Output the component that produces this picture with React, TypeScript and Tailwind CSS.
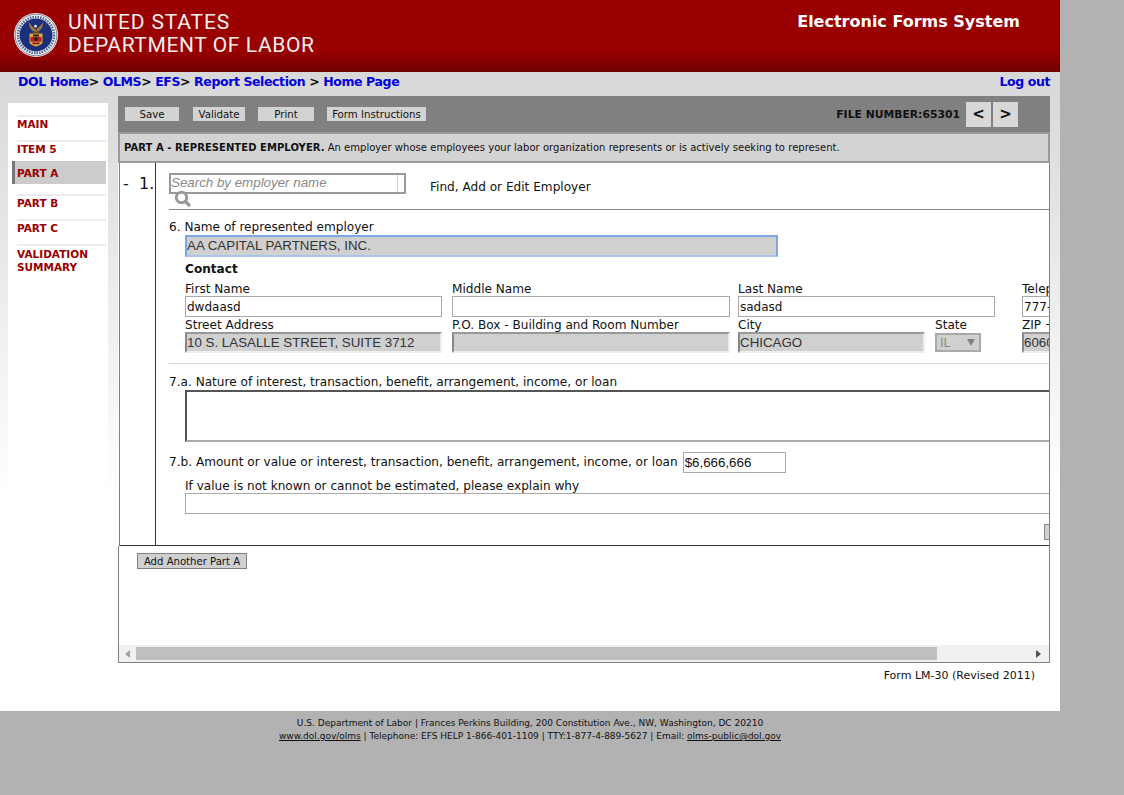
import * as React from "react"

const inputBase =
  "block h-[21px] border border-[#a9a9a9] bg-white pl-[1px] font-['DejaVu_Sans',sans-serif] text-[12px] text-[#111] outline-none"
const inputDisabled =
  "block h-[21px] border-2 border-t-[#999] border-l-[#888] border-r-[#eee] border-b-[#eee] bg-[#d0d0d0] font-['Liberation_Sans',sans-serif] text-[13.33px] text-[#333] outline-none"
const labelCls = "h-[14px] whitespace-nowrap leading-[16px] text-[12.1px] text-[#111]"

function Field(props: { label: string; value?: string; width: string; marginRight: string; disabled?: boolean }) {
  return (
    <div className={`${props.width} ${props.marginRight} shrink-0`}>
      <div className={labelCls}>{props.label}</div>
      <input
        readOnly
        value={props.value ?? ""}
        className={`${props.disabled ? inputDisabled : inputBase} mt-[1px] w-full`}
      />
    </div>
  )
}

function Seal() {
  return (
    <svg width="44" height="44" viewBox="0 0 44 44" className="shrink-0">
      <circle cx="22" cy="22" r="22" fill="#f4f4f0" />
      <circle cx="22" cy="22" r="20.8" fill="none" stroke="#4a5a8a" strokeWidth="0.7" />
      <circle cx="22" cy="22" r="18" fill="none" stroke="#5a6a96" strokeWidth="2.6" strokeDasharray="1.6 1" />
      <circle cx="22" cy="22" r="16.4" fill="#1b2f7d" />
      {/* eagle */}
      <path
        d="M22 16.5c-1 0-1.5-.8-1.5-1.6-1.6-.3-3.8-3.2-6-6.2.4 2.8 1.3 6.5 3 8 1.2 1 2.6 1.6 3.4 2h2.2c.8-.4 2.2-1 3.4-2 1.7-1.5 2.6-5.2 3-8-2.2 3-4.4 5.9-6 6.2 0 .8-.5 1.6-1.5 1.6z"
        fill="#9a7a3c"
      />
      <circle cx="21.6" cy="13.2" r="1.4" fill="#e8e0c8" />
      <path d="M18.5 18.5h7l-1 1.6h-5z" fill="#6b5326" />
      {/* shield */}
      <path d="M15.5 20.5h13v8.5c0 2.2-3.5 3.5-6.5 4.6-3-1.1-6.5-2.4-6.5-4.6z" fill="#e0a92c" />
      <path d="M16.5 24h11v4.6h-11z" fill="#b3202a" />
      <path d="M19 21.5h6v2h-6zM20.5 24.5h3v3.4h-3z" fill="#2a1a10" />
      <path d="M18 29.5h8l-1 1.8h-6z" fill="#7a1a1a" />
    </svg>
  )
}

function NavItem(props: { children: React.ReactNode; className?: string; active?: boolean }) {
  return (
    <div
      className={
        props.active
          ? `flex h-[23px] items-center border-l-[3px] border-[#777] bg-[#cccccc] pl-[2px] pt-[2px] ${props.className ?? ""}`
          : `ml-[5px] border-t-2 border-[#ececec] ${props.className ?? ""}`
      }
    >
      <div className="text-[10.5px] font-bold leading-[13px] text-[#990000]">{props.children}</div>
    </div>
  )
}

function ToolButton(props: { label: string; width: string; marginLeft: string }) {
  return (
    <button
      className={`${props.width} ${props.marginLeft} h-[14px] shrink-0 bg-[#d3d3d3] pt-[1px] text-center text-[10.2px] leading-[14px] text-[#111]`}
    >
      {props.label}
    </button>
  )
}

export default function App() {
  return (
    <div className="h-[795px] w-[1124px] overflow-hidden bg-[#b2b2b2] font-['DejaVu_Sans',sans-serif]">
      <div className="flex h-[711px] w-[1060px] flex-col bg-gradient-to-b from-[#d8d8d8] from-[10%] to-white to-[70%]">
        <header className="flex h-[72px] shrink-0 bg-[linear-gradient(to_bottom,#9a0000_0%,#990000_72%,#6f0000_100%)]">
          <div className="ml-[14px] mt-[13px]">
            <Seal />
          </div>
          <div className="ml-[10px] mt-[11px] font-['Roboto',sans-serif] text-[21px] font-normal leading-[23px] tracking-[0.6px] text-[#f3eeee]">
            <div className="tracking-[0.85px]">UNITED STATES</div>
            <div>DEPARTMENT OF LABOR</div>
          </div>
          <div className="ml-auto mr-[40px] mt-[11px] text-[16px] font-bold leading-[22px] text-white">
            Electronic Forms System
          </div>
        </header>

        <div className="flex h-[24px] shrink-0 items-center justify-between pb-[3px] pl-[18px] pr-[10px] text-[12.5px] font-bold tracking-[-0.4px] text-[#111]">
          <div className="whitespace-pre">
            <a className="text-[#0000dd]">DOL Home</a>&gt; <a className="text-[#0000dd]">OLMS</a>&gt;{" "}
            <a className="text-[#0000dd]">EFS</a>&gt; <a className="text-[#0000dd]">Report Selection</a> &gt;{" "}
            <a className="text-[#0000dd]">Home Page</a>
          </div>
          <a className="text-[#0000dd]">Log out</a>
        </div>

        <div className="flex">
          <aside className="ml-[8px] mt-[7px] h-[384px] w-[100px] shrink-0 bg-white pl-[4px] pr-[2px] pt-[12px]">
            <NavItem className="h-[25px] pt-[1px]">MAIN</NavItem>
            <NavItem className="h-[21px] pt-[1px]">ITEM 5</NavItem>
            <NavItem active>PART A</NavItem>
            <NavItem className="mt-[10px] h-[25px] pt-[1px]">PART B</NavItem>
            <NavItem className="h-[25px] pt-[1px]">PART C</NavItem>
            <NavItem className="pt-[2px]">
              VALIDATION
              <br />
              SUMMARY
            </NavItem>
          </aside>

          <main className="ml-[10px] flex h-[567px] w-[932px] shrink-0 flex-col overflow-hidden">
            <div className="flex h-[36px] shrink-0 items-center bg-[#808080]">
              <ToolButton label="Save" width="w-[54px]" marginLeft="ml-[7px]" />
              <ToolButton label="Validate" width="w-[52px]" marginLeft="ml-[14px]" />
              <ToolButton label="Print" width="w-[56px]" marginLeft="ml-[13px]" />
              <ToolButton label="Form Instructions" width="w-[99px]" marginLeft="ml-[13px]" />
              <div className="ml-auto pt-[2px] text-[10.8px] font-bold text-[#111]">FILE NUMBER:65301</div>
              <div className="ml-[6px] flex h-[25px] w-[25px] items-center justify-center bg-[#d8d8d8] text-[15px] font-bold text-[#111]">
                &lt;
              </div>
              <div className="ml-[2px] mr-[32px] flex h-[25px] w-[25px] items-center justify-center bg-[#d8d8d8] text-[15px] font-bold text-[#111]">
                &gt;
              </div>
            </div>

            <div className="flex h-[31px] shrink-0 items-center whitespace-nowrap border-2 border-[#999] bg-[#d3d3d3] pl-[4px] text-[10px] text-[#111]">
              <b className="tracking-[0.06px]">PART A - REPRESENTED EMPLOYER.</b>
              <span className="ml-[3px] tracking-[0.03px]">
                An employer whose employees your labor organization represents or is actively seeking to represent.
              </span>
            </div>

            <div className="flex min-h-0 flex-1 flex-col border-b border-r border-[#808080] bg-white">
              <div className="ml-[1px] flex h-[383px] shrink-0 overflow-hidden border-b border-l border-b-[#333] border-l-[#808080]">
                <div className="w-[36px] shrink-0 whitespace-pre border-r border-[#333] pl-[3px] pt-[12px] text-[16px] leading-[18px] text-[#111]">
                  {"-  1."}
                </div>
                <div className="w-[893px] shrink-0 overflow-hidden pl-[13px]">
                  <div className="flex h-[47px] border-b border-[#888] pt-[10px]">
                    <div className="relative h-[21px] w-[237px] shrink-0 border-2 border-[#999]">
                      <div className="h-full w-[227px] border-r border-[#ccc] font-['Liberation_Sans',sans-serif] text-[13.33px] italic leading-[16px] text-[#8a8a8a]">
                        Search by employer name
                      </div>
                      <svg width="18" height="18" viewBox="0 0 18 18" className="absolute left-[3px] top-[15px]">
                        <circle cx="7.5" cy="7.5" r="5.2" fill="white" stroke="#999" strokeWidth="3" />
                        <path d="M11.5 11.5L15 15" stroke="#999" strokeWidth="3.4" strokeLinecap="round" />
                      </svg>
                    </div>
                    <div className="ml-[24px] mt-[6px] whitespace-nowrap text-[12.1px] leading-[16px] text-[#111]">
                      Find, Add or Edit Employer
                    </div>
                  </div>

                  <div className={`${labelCls} mt-[9px]`}>6. Name of represented employer</div>
                  <input
                    readOnly
                    value="AA CAPITAL PARTNERS, INC."
                    className="ml-[16px] mt-[2px] block h-[22px] w-[593px] border-2 border-[#7ea6e0] border-b-[#a8c4ec] bg-[#d0d0d0] pb-[1px] font-['Liberation_Sans',sans-serif] text-[13.33px] text-[#333] outline-none"
                  />

                  <div className="ml-[16px] mt-[4px] h-[14px] text-[12.1px] font-bold leading-[16px] text-[#111]">
                    Contact
                  </div>

                  <div className="ml-[16px] mt-[6px] flex">
                    <Field label="First Name" value="dwdaasd" width="w-[257px]" marginRight="mr-[10px]" />
                    <Field label="Middle Name" width="w-[278px]" marginRight="mr-[8px]" />
                    <Field label="Last Name" value="sadasd" width="w-[257px]" marginRight="mr-[27px]" />
                    <Field label="Telephone" value="777-555-1212" width="w-[120px]" marginRight="mr-0" />
                  </div>

                  <div className="ml-[16px] flex">
                    <Field
                      disabled
                      label="Street Address"
                      value="10 S. LASALLE STREET, SUITE 3712"
                      width="w-[257px]"
                      marginRight="mr-[10px]"
                    />
                    <Field
                      disabled
                      label="P.O. Box - Building and Room Number"
                      width="w-[278px]"
                      marginRight="mr-[8px]"
                    />
                    <Field disabled label="City" value="CHICAGO" width="w-[187px]" marginRight="mr-[10px]" />
                    <div className="mr-[41px] w-[46px] shrink-0">
                      <div className={labelCls}>State</div>
                      <div className="mt-[2px] flex h-[19px] items-center justify-between border-2 border-[#a9a9a9] bg-[#d0d0d0] pl-[3px] pr-[4px] font-['Liberation_Sans',sans-serif] text-[13px] text-[#8a8a8a]">
                        IL
                        <svg width="8" height="7" viewBox="0 0 8 7">
                          <path d="M0 0h8L4 7z" fill="#808080" />
                        </svg>
                      </div>
                    </div>
                    <Field disabled label="ZIP + 4" value="60603" width="w-[120px]" marginRight="mr-0" />
                  </div>

                  <div className="mt-[10px] h-px bg-[#d8d8d8]" />

                  <div className={`${labelCls} mt-[10px]`}>
                    7.a. Nature of interest, transaction, benefit, arrangement, income, or loan
                  </div>
                  <div className="ml-[16px] mt-[2px] h-[52px] w-[900px] border-2 border-[#555] border-b-[#aaa]" />

                  <div className="mt-[10px] flex h-[21px] items-start">
                    <div className="mt-[3px] h-[14px] whitespace-nowrap text-[12.1px] leading-[14px] text-[#111]">
                      7.b. Amount or value or interest, transaction, benefit, arrangement, income, or loan
                    </div>
                    <input
                      readOnly
                      value="$6,666,666"
                      className={`${inputBase} ml-[5px] w-[103px] shrink-0 !font-['Liberation_Sans',sans-serif] !text-[13.33px]`}
                    />
                  </div>

                  <div className={`${labelCls} ml-[16px] mt-[5px]`}>
                    If value is not known or cannot be estimated, please explain why
                  </div>
                  <div className="ml-[16px] mt-[1px] h-[21px] w-[900px] border border-[#a9a9a9]" />

                  <div className="mt-[10px] ml-[875px] h-[16px] w-[8px] border border-[#888] bg-[#d0d0d0]" />
                </div>
              </div>

              <div className="flex min-h-0 flex-1 flex-col border-l border-[#808080]">
                <button className="ml-[18px] mt-[7px] h-[16px] w-[110px] shrink-0 border border-[#808080] bg-[#d0d0d0] pt-[1px] text-center text-[10.1px] leading-[14px] text-[#111]">
                  Add Another Part A
                </button>

                <div className="mt-auto flex h-[17px] shrink-0 items-center bg-[#f0f0f0]">
                  <svg width="6" height="8" viewBox="0 0 6 8" className="ml-[6px]">
                    <path d="M5 0v8L0 4z" fill="#a0a0a0" />
                  </svg>
                  <div className="ml-[5px] h-[13px] w-[801px] bg-[#bfbfbf]" />
                  <svg width="6" height="8" viewBox="0 0 6 8" className="ml-[98px]">
                    <path d="M1 0v8l5-4z" fill="#505050" />
                  </svg>
                </div>
              </div>
            </div>
          </main>
        </div>

        <div className="mt-[6px] pr-[25px] text-right text-[11px] leading-[14px] text-[#111]">
          Form LM-30 (Revised 2011)
        </div>
      </div>

      <footer className="w-[1060px] pt-[6px] text-center text-[9px] leading-[13px] text-[#111]">
        <div>U.S. Department of Labor | Frances Perkins Building, 200 Constitution Ave., NW, Washington, DC 20210</div>
        <div>
          <a className="underline">www.dol.gov/olms</a> | Telephone: EFS HELP 1-866-401-1109 | TTY:1-877-4-889-5627 |
          Email: <a className="underline">olms-public@dol.gov</a>
        </div>
      </footer>
    </div>
  )
}
